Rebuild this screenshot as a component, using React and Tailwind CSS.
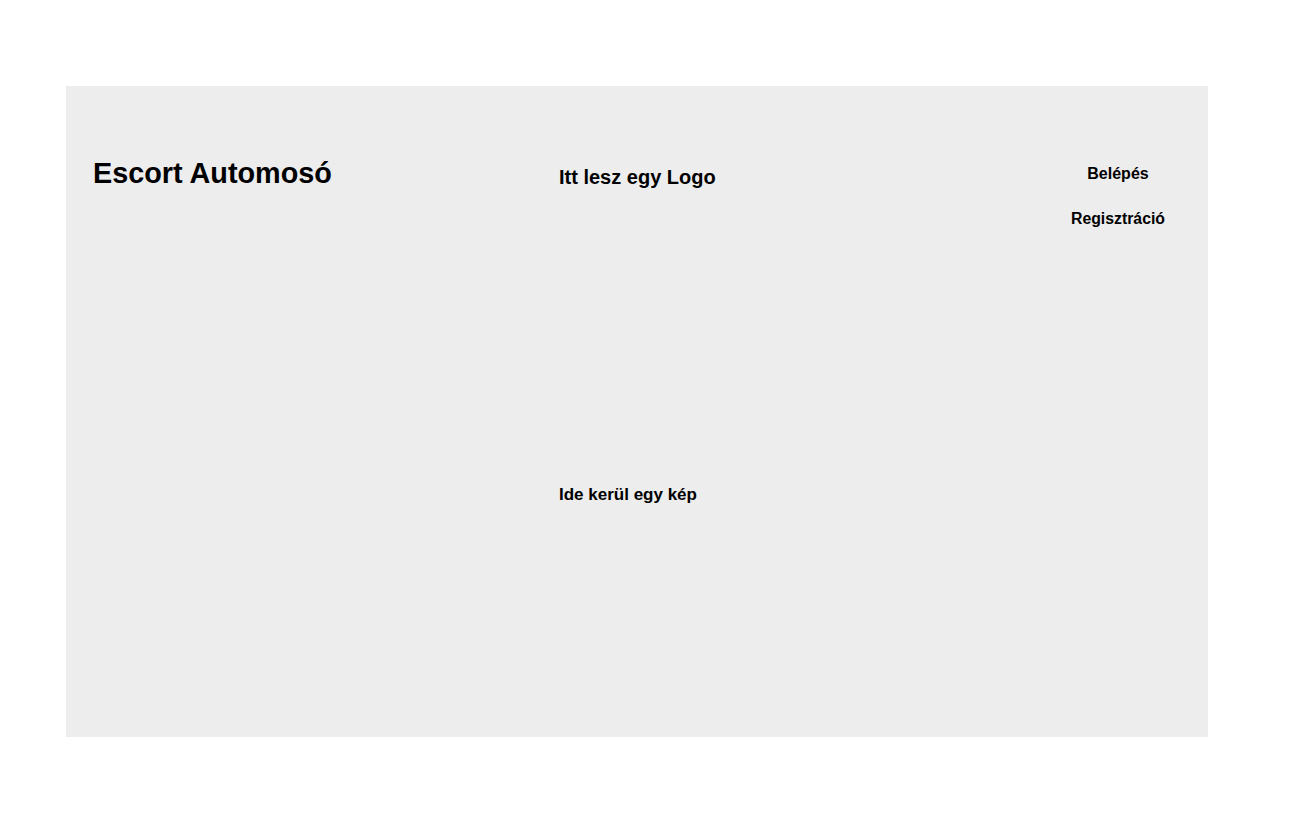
export default function App() {
  return (
    <div className="w-[1298px] h-[817px] bg-white pt-[86px] pl-[66px]" style={{ fontFamily: '"Liberation Sans", Arial, sans-serif' }}>
      <div className="w-[1142px] h-[651px] bg-[#ededed] flex text-black font-bold">
        <div className="w-[493px] pl-[27px] pt-[71px]">
          <h1 className="text-[28.8px] leading-[33px] font-bold">Escort Automosó</h1>
        </div>
        <div className="flex-1 pt-[80px] flex flex-col">
          <h2 className="text-[20px] leading-[23px] font-bold">Itt lesz egy Logo</h2>
          <p className="mt-[296px] text-[17px] leading-[20px] font-bold">Ide kerül egy kép</p>
        </div>
        <div className="w-[180px] pt-[79px] flex flex-col items-center">
          <a className="text-[16px] leading-[18px]">Belépés</a>
          <a className="mt-[27px] text-[15.8px] leading-[18px]">Regisztráció</a>
        </div>
      </div>
    </div>
  );
}
